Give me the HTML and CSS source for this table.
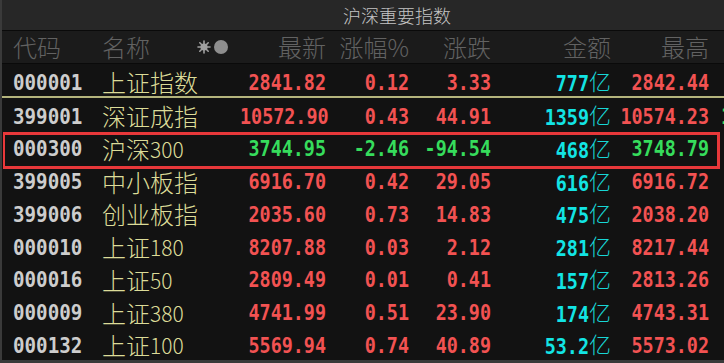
FILE: index.html
```html
<!DOCTYPE html>
<html lang="zh-CN">
<head>
<meta charset="utf-8">
<title>沪深重要指数</title>
<link rel="stylesheet" href="styles.css">
</head>
<body>
<div class="board">
  <div class="title">沪深重要指数</div>
  <div class="row head">
    <div class="c code">代码</div>
    <div class="c name">名称<span class="icons"><svg class="star" width="14" height="14" viewBox="0 0 14 14"><g stroke="#a0a0a0" stroke-width="1.6" stroke-linecap="round"><line x1="7" y1="1" x2="7" y2="13"/><line x1="1" y1="7" x2="13" y2="7"/><line x1="2.8" y1="2.8" x2="11.2" y2="11.2"/><line x1="11.2" y1="2.8" x2="2.8" y2="11.2"/></g><circle cx="7" cy="7" r="3.6" fill="#a0a0a0"/></svg><span class="dot"></span></span></div>
    <div class="c r">最新</div>
    <div class="c r">涨幅%</div>
    <div class="c r">涨跌</div>
    <div class="c r">金额</div>
    <div class="c r">最高</div>
    <div class="c extra"></div>
  </div>

  <div class="row first">
    <div class="c code"><span class="cd">000001</span></div>
    <div class="c name">上证指数</div>
    <div class="c r"><span class="n up">2841.82</span></div>
    <div class="c r"><span class="n up">0.12</span></div>
    <div class="c r"><span class="n up">3.33</span></div>
    <div class="c r"><span class="n amt">777</span><span class="yi">亿</span></div>
    <div class="c r"><span class="n up">2842.44</span></div>
    <div class="c extra"></div>
  </div>

  <div class="row">
    <div class="c code"><span class="cd">399001</span></div>
    <div class="c name">深证成指</div>
    <div class="c r"><span class="n up">10572.90</span></div>
    <div class="c r"><span class="n up">0.43</span></div>
    <div class="c r"><span class="n up">44.91</span></div>
    <div class="c r"><span class="n amt">1359</span><span class="yi">亿</span></div>
    <div class="c r"><span class="n up">10574.23</span></div>
    <div class="c extra"><span class="n down">1</span></div>
  </div>

  <div class="row sel">
    <div class="c code"><span class="cd">000300</span></div>
    <div class="c name">沪深<span class="ld">300</span></div>
    <div class="c r"><span class="n down">3744.95</span></div>
    <div class="c r"><span class="n down">-2.46</span></div>
    <div class="c r"><span class="n down">-94.54</span></div>
    <div class="c r"><span class="n amt">468</span><span class="yi">亿</span></div>
    <div class="c r"><span class="n down">3748.79</span></div>
    <div class="c extra"></div>
  </div>

  <div class="row">
    <div class="c code"><span class="cd">399005</span></div>
    <div class="c name">中小板指</div>
    <div class="c r"><span class="n up">6916.70</span></div>
    <div class="c r"><span class="n up">0.42</span></div>
    <div class="c r"><span class="n up">29.05</span></div>
    <div class="c r"><span class="n amt">616</span><span class="yi">亿</span></div>
    <div class="c r"><span class="n up">6916.72</span></div>
    <div class="c extra"></div>
  </div>

  <div class="row">
    <div class="c code"><span class="cd">399006</span></div>
    <div class="c name">创业板指</div>
    <div class="c r"><span class="n up">2035.60</span></div>
    <div class="c r"><span class="n up">0.73</span></div>
    <div class="c r"><span class="n up">14.83</span></div>
    <div class="c r"><span class="n amt">475</span><span class="yi">亿</span></div>
    <div class="c r"><span class="n up">2038.20</span></div>
    <div class="c extra"></div>
  </div>

  <div class="row">
    <div class="c code"><span class="cd">000010</span></div>
    <div class="c name">上证<span class="ld">180</span></div>
    <div class="c r"><span class="n up">8207.88</span></div>
    <div class="c r"><span class="n up">0.03</span></div>
    <div class="c r"><span class="n up">2.12</span></div>
    <div class="c r"><span class="n amt">281</span><span class="yi">亿</span></div>
    <div class="c r"><span class="n up">8217.44</span></div>
    <div class="c extra"></div>
  </div>

  <div class="row">
    <div class="c code"><span class="cd">000016</span></div>
    <div class="c name">上证<span class="ld">50</span></div>
    <div class="c r"><span class="n up">2809.49</span></div>
    <div class="c r"><span class="n up">0.01</span></div>
    <div class="c r"><span class="n up">0.41</span></div>
    <div class="c r"><span class="n amt">157</span><span class="yi">亿</span></div>
    <div class="c r"><span class="n up">2813.26</span></div>
    <div class="c extra"></div>
  </div>

  <div class="row">
    <div class="c code"><span class="cd">000009</span></div>
    <div class="c name">上证<span class="ld">380</span></div>
    <div class="c r"><span class="n up">4741.99</span></div>
    <div class="c r"><span class="n up">0.51</span></div>
    <div class="c r"><span class="n up">23.90</span></div>
    <div class="c r"><span class="n amt">174</span><span class="yi">亿</span></div>
    <div class="c r"><span class="n up">4743.31</span></div>
    <div class="c extra"></div>
  </div>

  <div class="row">
    <div class="c code"><span class="cd">000132</span></div>
    <div class="c name">上证<span class="ld">100</span></div>
    <div class="c r"><span class="n up">5569.94</span></div>
    <div class="c r"><span class="n up">0.74</span></div>
    <div class="c r"><span class="n up">40.89</span></div>
    <div class="c r"><span class="n amt">53.2</span><span class="yi">亿</span></div>
    <div class="c r"><span class="n up">5573.02</span></div>
    <div class="c extra"></div>
  </div>
</div>
</body>
</html>
```

FILE: styles.css
```css
html, body {
  margin: 0;
  padding: 0;
  background: #2e2e2e;
}

.board {
  width: 724px;
  height: 363px;
  box-sizing: border-box;
  border-left: 2px solid #3a3a3a;
  border-bottom: 3px solid #3a3a3a;
  background: #121212;
  overflow: hidden;
  font-family: "Noto Sans CJK SC", "Noto Sans", sans-serif;
  font-weight: 300;
}

.title {
  height: 30px;
  border-bottom: 1px solid #0a0a0a;
  background: #272727;
  color: #c4c4c4;
  font-size: 18px;
  line-height: 30px;
  padding-left: 341px;
  white-space: nowrap;
}

.row {
  display: grid;
  grid-template-columns: 100px 138px 86px 83px 82px 120px 98px 1fr;
  align-items: center;
  height: 32.75px;
  line-height: 32px;
  position: relative;
}

.head {
  height: 32px;
  background: #1b1b1b;
  border-bottom: 1px solid #0a0a0a;
  color: #626262;
  font-size: 24px;
}

.first {
  height: 32px;
  border-bottom: 2px solid #b4b47c;
}

.sel::after {
  content: "";
  position: absolute;
  left: 1px;
  right: 4px;
  top: 1px;
  height: 37px;
  box-sizing: border-box;
  border: 3px solid #e8383a;
  border-left-width: 2px;
  pointer-events: none;
}

.c {
  white-space: nowrap;
}

.code {
  padding-left: 11px;
}

.name {
  font-size: 24px;
  color: #dcdc98;
  display: flex;
  align-items: center;
}

.head .name {
  color: #626262;
}

.r {
  text-align: right;
}

.extra {
  padding-left: 12px;
  overflow: hidden;
}

.icons {
  display: inline-flex;
  align-items: center;
  gap: 3px;
  margin-left: 47px;
}

.star {
  display: block;
}

.dot {
  display: block;
  width: 14px;
  height: 14px;
  border-radius: 50%;
  background: #8e8e8e;
}

.ld {
  font-size: 21px;
}

.cd {
  display: inline-block;
  font-family: "DejaVu Sans Mono", monospace;
  font-weight: bold;
  font-size: 19.2px;
  color: #cdcdcd;
  transform: scaleY(1.1);
}

.n {
  display: inline-block;
  font-family: "DejaVu Sans Mono", monospace;
  font-weight: bold;
  font-size: 18.4px;
  transform: scaleY(1.12);
}

.up {
  color: #f25252;
}

.down {
  color: #36dc5c;
}

.amt {
  color: #12e4e4;
}

.yi {
  font-size: 22px;
  color: #18d6d6;
}
```
